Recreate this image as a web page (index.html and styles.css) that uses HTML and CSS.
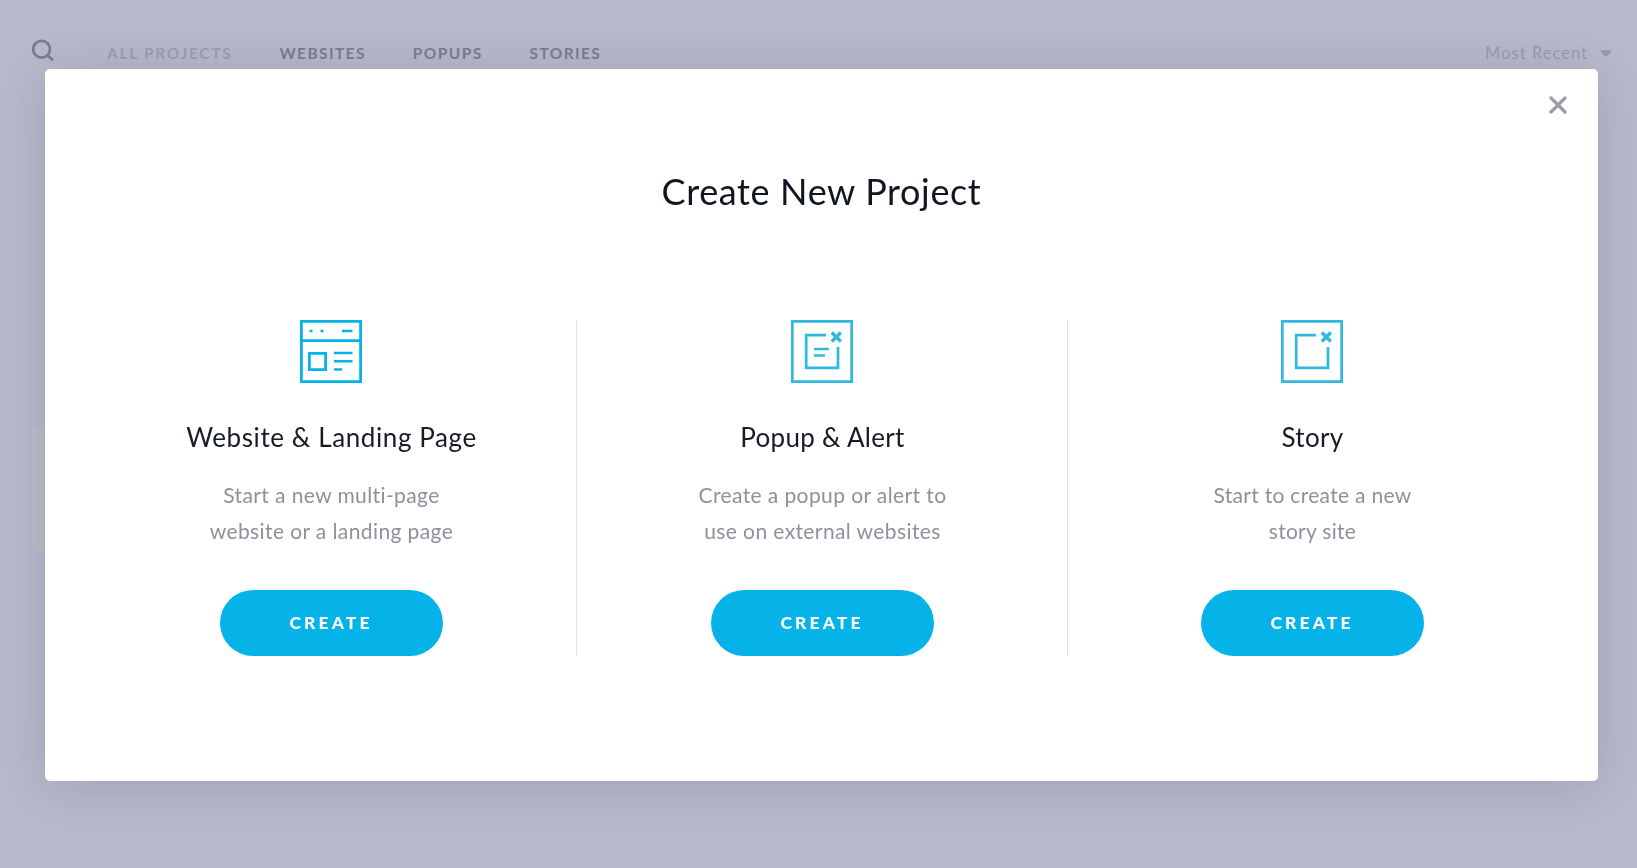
FILE: index.html
```html
<!DOCTYPE html>
<html lang="en">
<head>
<meta charset="utf-8">
<title>Create New Project</title>
<link rel="stylesheet" href="styles.css">
</head>
<body>
<header class="topbar">
  <svg class="search" width="24" height="24" viewBox="0 0 24 24" fill="none" stroke="#797d8d" stroke-width="2.7"><circle cx="9.600" cy="10.200" r="8.400"/><path d="M15.600 16.200l5.400 5.200"/></svg>
  <nav class="tabs">
    <span class="tab active">ALL PROJECTS</span>
    <span class="tab">WEBSITES</span>
    <span class="tab">POPUPS</span>
    <span class="tab">STORIES</span>
  </nav>
  <div class="sort"><span>Most Recent</span><svg width="12" height="7" viewBox="0 0 12 7"><path d="M0 .3h12L8 5.600Q6 7.200 4 5.600z" fill="#979bb0"/></svg></div>
</header>
<main class="projects"><div class="card"><div class="thumb"></div><div class="meta"></div></div></main>

<section class="modal">
  <svg class="close" width="18" height="18" viewBox="0 0 18 18" fill="none" stroke="#9b9da3" stroke-width="3.2" stroke-linecap="round"><path d="M2 2l14 14M16 2L2 16"/></svg>
  <h1 class="title">Create New Project</h1>
  <div class="options">
    <article class="option">
      <svg width="63" height="63" viewBox="0 0 63 63" fill="none" stroke="#05b3e8" stroke-width="2.800"><path d="M1.400 1.400h59.200v60.200H1.400zM1 20.600h60M9.400 33.400h16.200v16.200H9.400z"/><path d="M9.500 11h3M20.500 11h3M42 11h10.500M34 33h18.500M34 41.200h18.500M34 49.500h8" stroke-width="2.500"/></svg>
      <h2 class="name wide">Website &amp; Landing Page</h2>
      <p class="desc">Start a new multi-page<br>website or a landing page</p>
      <button class="create">CREATE</button>
    </article>
    <article class="option middle">
      <svg width="63" height="63" viewBox="0 0 63 63" fill="none" stroke="#2fb9de" stroke-width="2.700"><path d="M1.350 1.350h59.300v60.300H1.350zM35 15.200H15.200v32.600h31.800V27M23 29h14.800M23 35.500h11"/><path d="M40.800 12.500l9 9M49.800 12.500l-9 9" stroke-width="3.400"/></svg>
      <h2 class="name">Popup &amp; Alert</h2>
      <p class="desc">Create a popup or alert to<br>use on external websites</p>
      <button class="create">CREATE</button>
    </article>
    <article class="option last">
      <svg width="63" height="63" viewBox="0 0 63 63" fill="none" stroke="#2fb9de" stroke-width="2.700"><path d="M1.350 1.350h59.300v60.300H1.350zM35 15.200H15.200v32.600h31.800V27"/><path d="M40.800 12.500l9 9M49.800 12.500l-9 9" stroke-width="3.400"/></svg>
      <h2 class="name">Story</h2>
      <p class="desc snug">Start to create a new<br>story site</p>
      <button class="create">CREATE</button>
    </article>
  </div>
</section>
</body>
</html>
```
FILE: styles.css
```css
* { box-sizing: border-box; }
body {
  margin: 0;
  height: 868px;
  overflow: hidden;
  background: #b9bacd;
  font-family: Lato, "Open Sans", sans-serif;
}
.topbar {
  display: flex;
  align-items: flex-start;
  height: 144px;
  padding: 39px 25px 0 32px;
}
.search { flex: none; }
.tabs { display: flex; gap: 47px; padding: 5px 0 0 51px; }
.tab { font-size: 15.5px; line-height: 19px; font-weight: 700; letter-spacing: 1.4px; color: #7b7f8e; white-space: nowrap; }
.tab.active { letter-spacing: 1.7px; color: #9b9fba; }
.sort { display: flex; align-items: center; gap: 12px; margin-left: auto; padding-top: 4px; font-size: 16.5px; line-height: 20px; letter-spacing: 1.02px; color: #999cb0; }
.projects { padding-left: 32px; }
.card { width: 360px; height: 408px; border-radius: 4px; overflow: hidden; background: #bbbacb; }
.thumb { height: 283px; }
.meta { height: 125px; background: #bebfcc; }
.modal {
  position: fixed;
  top: 69px;
  left: 45px;
  width: 1553px;
  height: 712px;
  padding: 98px 40px 0 42px;
  border-radius: 5px;
  background: #fff;
  box-shadow: 0 5px 56px rgba(22, 55, 61, .19);
}
.close { position: absolute; top: 27px; right: 31px; }
.title { margin: 0 1px 0 -1px; height: 153px; font-size: 36px; line-height: 48px; font-weight: 400; letter-spacing: .64px; text-align: center; color: #10151f; }
.options { display: grid; grid-template-columns: 490px 491px 490px; height: 336px; }
.option { display: flex; flex-direction: column; align-items: center; border-right: 1px solid #e5e5e9; text-align: center; }
.option.middle { padding-left: 1px; }
.option.last { border-right: 0; padding-right: 1px; }
.option svg { flex: none; }
.name { margin: 34px 0 0; font-size: 26px; line-height: 40px; font-weight: 400; letter-spacing: .3px; color: #181c25; }
.name.wide { letter-spacing: .6px; }
.desc { margin: 20px 0 0; height: 113px; font-size: 21px; line-height: 36px; letter-spacing: .4px; color: #8f909d; }
.desc.snug { letter-spacing: .3px; }
.create { width: 223px; height: 66px; flex: none; padding: 0 1px 0 0; border: 0; border-radius: 33px; background: #05b3e8; color: #fff; font: 900 17.5px/66px Lato, sans-serif; letter-spacing: 3.1px; }
```
